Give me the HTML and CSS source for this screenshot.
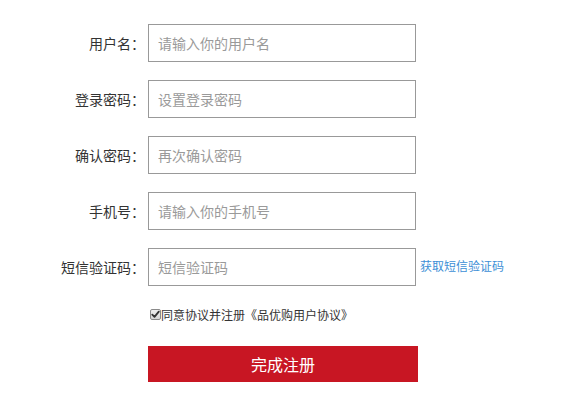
FILE: index.html
```html
<!DOCTYPE html>
<html lang="zh">
<head>
<meta charset="utf-8">
<title>注册</title>
<link rel="stylesheet" href="styles.css">
</head>
<body>
<form class="reg">
  <div class="row"><label class="lbl">用户名：</label><input class="inp" placeholder="请输入你的用户名"></div>
  <div class="row"><label class="lbl">登录密码：</label><input class="inp" placeholder="设置登录密码"></div>
  <div class="row"><label class="lbl">确认密码：</label><input class="inp" placeholder="再次确认密码"></div>
  <div class="row"><label class="lbl">手机号：</label><input class="inp" placeholder="请输入你的手机号"></div>
  <div class="row"><label class="lbl">短信验证码：</label><input class="inp" placeholder="短信验证码"><a class="sms" href="#">获取短信验证码</a></div>
  <div class="agree">
    <span class="chk"><svg width="9" height="9" viewBox="0 0 9 9"><path d="M1.3 4.6 L3.5 6.9 L7.8 1.6" fill="none" stroke="#333" stroke-width="1.8" stroke-linecap="round" stroke-linejoin="round"/></svg></span>
    <span class="agree-text">同意协议并注册《品优购用户协议》</span>
  </div>
  <div class="btn-row"><button type="button" class="submit">完成注册</button></div>
</form>
</body>
</html>
```
FILE: styles.css
```css
* { box-sizing: border-box; }
body {
  margin: 0;
  background: #fff;
  font-family: "Noto Sans CJK SC", "Noto Sans", sans-serif;
  color: #333;
}
.reg {
  padding-top: 24px;
}
.row {
  display: flex;
  align-items: center;
  height: 38px;
  margin-bottom: 18px;
}
.lbl {
  width: 148px;
  padding-right: 3px;
  text-align: right;
  font-size: 14px;
  color: #333;
}
.inp {
  width: 268px;
  height: 38px;
  border: 1px solid #999;
  padding: 0 9px;
  font-size: 14px;
  font-family: inherit;
  color: #333;
  outline: none;
}
.inp::placeholder { color: #9a9a9a; }
.sms {
  margin-left: 4px;
  margin-top: -4px;
  font-size: 12px;
  color: #3d8fd6;
  text-decoration: none;
}
.agree {
  display: flex;
  align-items: center;
  height: 20px;
  padding-left: 150px;
}
.chk {
  width: 11px;
  height: 11px;
  border: 1px solid #8a8a8a;
  border-radius: 2px;
  background: linear-gradient(#eee, #d6d6d6);
  display: flex;
  align-items: center;
  justify-content: center;
}
.agree-text {
  font-size: 12px;
  color: #333;
}
.btn-row {
  margin-top: 22px;
  padding-left: 148px;
}
.submit {
  display: block;
  width: 270px;
  height: 36px;
  border: 0;
  background: #c81623;
  color: #fff;
  font-size: 16px;
  font-family: inherit;
  padding: 0;
}
```
